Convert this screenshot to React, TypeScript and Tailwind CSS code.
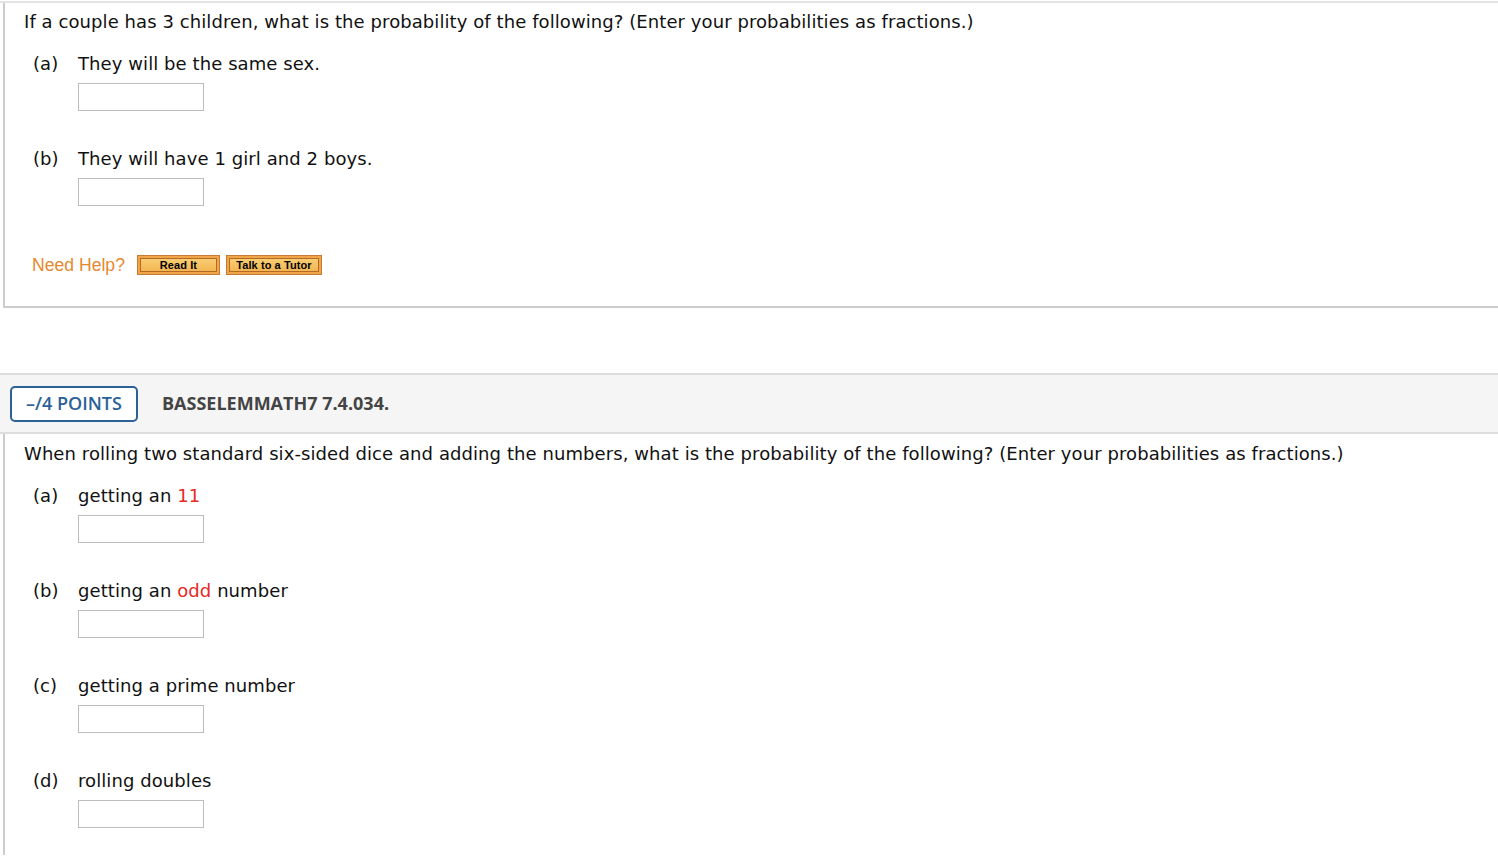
import React from "react";

function Answer() {
  return <div className="ml-[45px] mt-[9px] h-[28px] w-[126px] border border-[#bdbdbd] bg-white" />;
}

function Part({ label, children, first }: { label: string; children: React.ReactNode; first?: boolean }) {
  return (
    <div className={first ? "ml-[9px] mt-[22px]" : "ml-[9px] mt-[38px]"}>
      <div className="flex h-[20px] items-center leading-[20px]">
        <span className="w-[45px]">{label}</span>
        <span>{children}</span>
      </div>
      <Answer />
    </div>
  );
}

function HelpButton({ label, w }: { label: string; w: string }) {
  return (
    <div className={`${w} h-[20px] border border-[#c67b33] bg-[#f0a548] p-[2px]`}>
      <div className="flex h-full items-center justify-center border border-[#b46a25] bg-gradient-to-b from-[#f8cd72] to-[#f2b651] font-['Liberation_Sans'] text-[11px] font-bold leading-none text-black">
        {label}
      </div>
    </div>
  );
}

export default function App() {
  return (
    <div className="min-h-[856px] bg-white font-['DejaVu_Sans',sans-serif] text-[18px] tracking-[0.08px] text-[#111]">
      <div className="h-[1px]" />
      <div className="h-[2px] bg-[#e3e3e3]" />
      <div className="ml-[3px] h-[305px] border-b-2 border-l-2 border-[#cccccc] pl-[19px] pt-[9px]">
        <div className="h-[20px] leading-[20px]">
          If a couple has 3 children, what is the probability of the following? (Enter your probabilities as fractions.)
        </div>
        <Part label="(a)" first>
          They will be the same sex.
        </Part>
        <Part label="(b)">They will have 1 girl and 2 boys.</Part>
        <div className="ml-[8px] mt-[46px] flex items-center gap-[6px]">
          <span className="mr-[6px] font-['Liberation_Sans'] text-[17.6px] tracking-normal text-[#e6882e]">Need Help?</span>
          <HelpButton label="Read It" w="w-[83px]" />
          <HelpButton label="Talk to a Tutor" w="w-[96px]" />
        </div>
      </div>
      <div className="mt-[65px] flex h-[61px] items-center border-y-2 border-[#dddddd] bg-[#f5f5f5]">
        <div className="ml-[10px] flex h-[36px] w-[128px] items-center justify-center rounded-[5px] border-2 border-[#2b6197] bg-white font-['Open_Sans'] text-[18px] font-semibold tracking-normal text-[#2b6197]">
          –/4 POINTS
        </div>
        <div className="ml-[24px] font-['Open_Sans'] text-[18px] font-bold tracking-normal text-[#444444]">BASSELEMMATH7 7.4.034.</div>
      </div>
      <div className="ml-[3px] h-[421px] border-l-2 border-[#cccccc] pl-[19px] pt-[10px]">
        <div className="h-[20px] leading-[20px]">
          When rolling two standard six-sided dice and adding the numbers, what is the probability of the following? (Enter your probabilities as fractions.)
        </div>
        <Part label="(a)" first>
          getting an <span className="text-[#e8281e]">11</span>
        </Part>
        <Part label="(b)">
          getting an <span className="text-[#e8281e]">odd</span> number
        </Part>
        <Part label="(c)">getting a prime number</Part>
        <Part label="(d)">rolling doubles</Part>
      </div>
    </div>
  );
}
